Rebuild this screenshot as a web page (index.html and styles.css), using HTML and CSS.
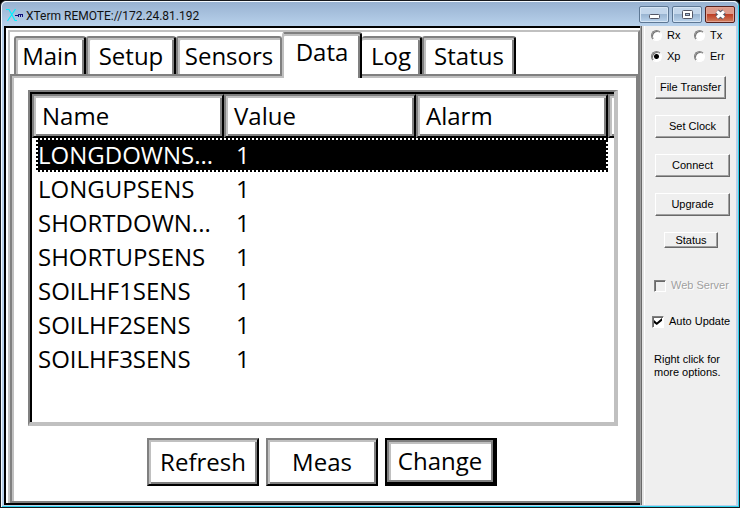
FILE: index.html
```html
<!DOCTYPE html>
<html lang="en">
<head>
<meta charset="utf-8">
<title>XTerm REMOTE://172.24.81.192</title>
<link rel="stylesheet" href="styles.css">
</head>
<body>
<div class="window">
  <header class="titlebar">
    <svg class="app-icon" viewBox="0 0 17 16" width="17" height="16" aria-hidden="true">
      <path d="M0 2.500h3l6 11h2M9.500 2L1.500 14" fill="none" stroke="#00f0ff" stroke-width="1.200"/>
      <path d="M9 8.500h3M12.500 7v3M14.500 7v3M16.500 7v3M12 7.500h5" fill="none" stroke="#10107c" stroke-width="1"/>
    </svg>
    <h1 class="title">XTerm REMOTE://172.24.81.192</h1>
    <div class="window-buttons">
      <button class="window-button" type="button" aria-label="Minimize">
        <svg viewBox="0 0 28 15" width="28" height="15"><rect x="9.500" y="7.500" width="10" height="4" rx="1" fill="#fff" stroke="#535666"/></svg>
      </button>
      <button class="window-button" type="button" aria-label="Maximize">
        <svg viewBox="0 0 28 15" width="28" height="15"><rect x="9.500" y="3.500" width="10" height="8" rx="1" fill="#fff" stroke="#535666"/><rect x="12.500" y="6.500" width="4" height="2" fill="#a9c3df" stroke="#535666"/></svg>
      </button>
      <button class="window-button close" type="button" aria-label="Close">
        <svg viewBox="0 0 28 15" width="28" height="15"><path d="M11 4.500l7 6M18 4.500l-7 6" stroke="#535666" stroke-width="5"/><path d="M11 4.500l7 6M18 4.500l-7 6" stroke="#fff" stroke-width="3"/></svg>
      </button>
    </div>
  </header>
  <div class="client">
    <main class="terminal">
      <nav class="tabs">
        <button class="tab main" type="button">Main</button>
        <button class="tab setup" type="button">Setup</button>
        <button class="tab sensors" type="button">Sensors</button>
        <button class="tab data active" type="button">Data</button>
        <button class="tab log" type="button">Log</button>
        <button class="tab status" type="button">Status</button>
      </nav>
      <section class="page">
        <div class="list">
          <table>
            <colgroup><col class="field"><col class="field"><col><col class="rest"></colgroup>
            <thead><tr><th>Name</th><th>Value</th><th>Alarm</th><th class="stub"></th></tr></thead>
            <tbody>
              <tr class="selected"><td>LONGDOWNS...</td><td>1</td><td></td><td></td></tr>
              <tr><td>LONGUPSENS</td><td>1</td><td></td><td></td></tr>
              <tr><td>SHORTDOWN...</td><td>1</td><td></td><td></td></tr>
              <tr><td>SHORTUPSENS</td><td>1</td><td></td><td></td></tr>
              <tr><td>SOILHF1SENS</td><td>1</td><td></td><td></td></tr>
              <tr><td>SOILHF2SENS</td><td>1</td><td></td><td></td></tr>
              <tr><td>SOILHF3SENS</td><td>1</td><td></td><td></td></tr>
            </tbody>
          </table>
        </div>
        <div class="actions">
          <button class="action" type="button">Refresh</button>
          <button class="action" type="button">Meas</button>
          <button class="action default" type="button">Change</button>
        </div>
      </section>
    </main>
    <aside class="panel">
      <div class="modes">
        <label><input type="radio" name="rx">Rx</label>
        <label><input type="radio" name="tx">Tx</label>
        <label><input type="radio" name="xp" checked>Xp</label>
        <label><input type="radio" name="err">Err</label>
      </div>
      <div class="commands">
        <button class="command narrow" type="button">File Transfer</button>
        <button class="command" type="button">Set Clock</button>
        <button class="command" type="button">Connect</button>
        <button class="command" type="button">Upgrade</button>
        <button class="command small" type="button">Status</button>
      </div>
      <label class="check disabled"><input type="checkbox" disabled>Web Server</label>
      <label class="check"><input type="checkbox" checked>Auto Update</label>
      <p class="hint">Right click for<br>more options.</p>
    </aside>
  </div>
</div>
</body>
</html>
```
FILE: styles.css
```css
* { box-sizing: border-box; }
body { margin: 0; background: #000; }
button, input { margin: 0; font: inherit; color: inherit; }
button { padding: 0; }
svg { display: block; }

.window {
  display: flex;
  flex-direction: column;
  min-height: 100vh;
  padding: 0 2px 2px;
  border: 1px solid #16181c;
  border-radius: 6px 6px 0 0;
  background: #b9d1ea;
  box-shadow: inset 1px 1px #f4faff, inset -1px -1px #2bd3ee;
}

/* Title bar */
.titlebar {
  display: flex;
  align-items: center;
  height: 25px;
  margin: 0 -1px;
  padding: 0 3px 0 4px;
  border-top: 1px solid #f4faff;
  border-radius: 5px 5px 0 0;
  background: linear-gradient(#98b2d1, #b8d1eb);
}
.app-icon { margin-top: 2px; }
.title {
  flex: 1;
  margin: 3px 0 0 3px;
  font: 400 12px/16px Roboto, sans-serif;
  color: #111;
}
.window-buttons { display: flex; gap: 3px; margin-top: 1px; }
.window-button {
  width: 30px;
  height: 17px;
  border: 1px solid #5d7794;
  border-radius: 2px;
  background: linear-gradient(#c3d6eb 48%, #9ab5d2 50%, #b9d2eb);
  box-shadow: inset 0 0 0 1px #d6e5f4;
}
.close {
  border-color: #57201c;
  background: linear-gradient(#dd9a8a 46%, #bd3f26 50%, #d1805f);
  box-shadow: inset 0 0 0 1px #e4a493;
}

/* Client area */
.client { display: flex; flex: 1; margin: 0 1px; background: #efefef; }
.terminal {
  display: flex;
  flex: 1;
  flex-direction: column;
  min-width: 0;
  padding: 2px 0 0 2px;
  border: solid #000;
  border-width: 2px 0 2px 2px;
  background: #fff;
  color: #000;
  font: 400 24px/34px "Open Sans", "Noto Sans", sans-serif;
}
.tabs {
  display: flex;
  align-items: flex-end;
  height: 44px;
  padding-left: 4px;
  border: solid #c0c0c0;
  border-width: 2px 0 0 2px;
  border-right: 2px solid #808080;
}
.tab {
  height: 38px;
  padding: 0;
  border: 2px solid #808080;
  border-right-color: #000;
  border-bottom: 0;
  border-radius: 3px 3px 0 0;
  background: #fff;
  box-shadow: inset 2px 2px #c0c0c0, inset -2px 0 #808080;
}
.main { width: 72px; }
.setup { width: 90px; }
.sensors { width: 106px; }
.data { width: 80px; }
.log { width: 60px; }
.status { width: 94px; }
.sensors { border-right-color: #808080; box-shadow: inset 2px 2px #c0c0c0; }
.log { border-left: 0; box-shadow: inset 0 2px #c0c0c0, inset -2px 0 #808080; }
.active {
  position: relative;
  height: 46px;
  margin-bottom: -4px;
  padding-bottom: 8px;
  border-left-color: #c0c0c0;
  box-shadow: inset 0 2px #c0c0c0, inset -2px 0 #808080;
}
.page {
  flex: 1;
  padding: 14px 18px 13px 14px;
  border: 2px solid #808080;
  border-right-width: 4px;
  margin-left: 2px;
  box-shadow: inset 2px 2px #c0c0c0, -2px 0 #c0c0c0;
}
.list {
  height: 336px;
  margin-left: 2px;
  border: 4px solid #c0c0c0;
  border-top: 2px solid #808080;
  border-left: 2px solid #808080;
  box-shadow: inset 2px 2px #000;
  padding: 2px 0 0 2px;
}
table { width: 100%; table-layout: fixed; border-collapse: separate; border-spacing: 0; }
.field { width: 192px; }
.rest { width: 6px; }
th {
  height: 44px;
  padding: 0 0 0 8px;
  border: 2px solid #808080;
  border-right-color: #000;
  border-bottom-color: #000;
  box-shadow: inset 2px 2px #c0c0c0, inset -2px -2px #808080;
  font-weight: inherit;
  text-align: left;
}
.stub { padding: 0; border-right: 0; box-shadow: inset 2px 2px #c0c0c0, inset 0 -2px #808080; }
td { height: 34px; padding: 0 0 0 12px; line-height: 34px; white-space: nowrap; }
td:first-child { padding-left: 6px; }
.selected { position: relative; z-index: 0; color: #fff; }
.selected td:first-child::before {
  content: "";
  position: absolute;
  z-index: -1;
  inset: 0 6px 0 4px;
  background:
    repeating-linear-gradient(90deg, #fff 0 2px, #000 2px 4px) top / 100% 2px no-repeat,
    repeating-linear-gradient(90deg, #fff 0 2px, #000 2px 4px) bottom / 100% 2px no-repeat,
    repeating-linear-gradient(#fff 0 2px, #000 2px 4px) left / 2px 100% no-repeat,
    repeating-linear-gradient(#fff 0 2px, #000 2px 4px) right / 2px 100% no-repeat,
    #000;
}
.actions { display: flex; justify-content: center; gap: 7px; margin-top: 12px; }
.action {
  width: 112px;
  height: 48px;
  border: 2px solid #808080;
  border-right-color: #000;
  border-bottom-color: #000;
  background: #fff;
  box-shadow: inset 2px 2px #c0c0c0, inset -2px -2px #808080;
}
.default {
  border-color: #000;
  border-width: 2px 4px 4px 2px;
  box-shadow: inset 0 0 0 2px #808080, inset 4px 4px #c0c0c0;
}

/* Side panel */
.panel {
  width: 96px;
  padding: 3px 0 0 11px;
  border-left: 1px solid #a0a0a0;
  background: #efefef;
  box-shadow: inset 1px 0 #696969, inset 3px 0 #e3e3e3, inset 4px 0 #fff;
  color: #000;
  font: 11px/13px "Liberation Sans", sans-serif;
}
.modes { display: grid; grid-template-columns: 43px 1fr; row-gap: 8px; margin-left: -1px; }
.modes label { display: flex; align-items: center; gap: 5px; height: 13px; }
input { appearance: none; flex: none; }
input[type="radio"] {
  width: 11px;
  height: 11px;
  border: 1px solid;
  border-color: #808080 #fff #fff #808080;
  border-radius: 50%;
  background: #fff;
  box-shadow: inset 1px 1px #777;
}
input[type="radio"]:checked { background: radial-gradient(circle, #000 2px, #fff 3px); }
.commands { display: flex; flex-direction: column; gap: 16px; margin: 13px 0 0 3px; }
.command {
  width: 75px;
  height: 23px;
  border: 1px solid;
  border-color: #fff #696969 #696969 #fff;
  background: #efefef;
  box-shadow: inset -1px -1px #a0a0a0;
}
.narrow { width: 71px; }
.small { width: 54px; height: 16px; margin-left: 9px; line-height: 12px; }
.check { display: flex; align-items: center; gap: 5px; height: 13px; }
.check + .check { margin-top: 23px; }
.commands + .check { margin-top: 31px; }
.check input {
  width: 12px;
  height: 12px;
  border: 1px solid;
  border-color: #808080 #fff #fff #808080;
  background: #fff;
  box-shadow: inset 1px 1px #696969;
}
.check input:checked {
  display: grid;
  place-items: center;
}
.check input:checked::before {
  content: "";
  width: 8px;
  height: 7px;
  background: #000;
  clip-path: polygon(0 30%, 35% 65%, 100% 0, 100% 40%, 35% 100%, 0 70%);
}
.disabled { padding-left: 2px; color: #a0a0a0; text-shadow: 1px 1px #fff; }
.check.disabled input { background: #efefef; }
.hint { margin: 25px 0 0 2px; }
```
